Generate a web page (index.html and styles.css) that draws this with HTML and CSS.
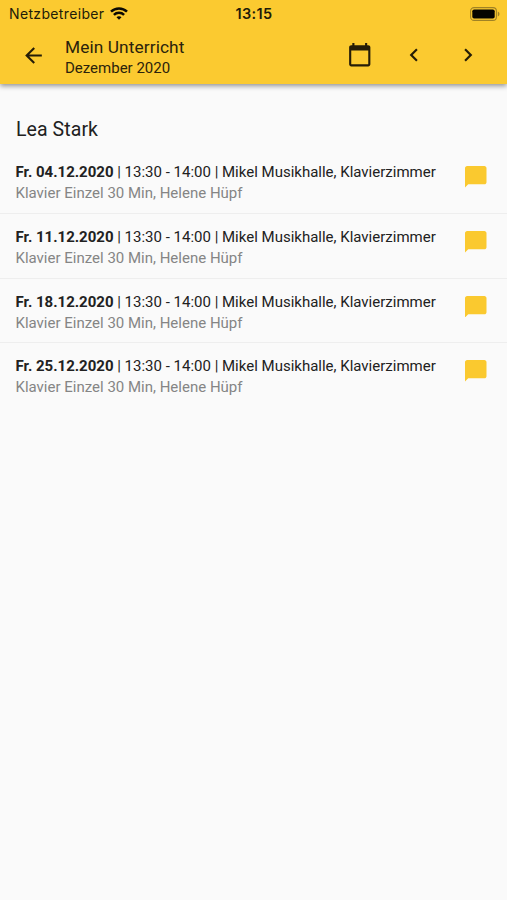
FILE: index.html
```html
<!DOCTYPE html>
<html lang="de">
<head>
<meta charset="utf-8">
<title>Mein Unterricht</title>
<link rel="stylesheet" href="styles.css">
</head>
<body>
<header class="top">
  <div class="status">
    <div class="carrier"><span>Netzbetreiber</span>
      <svg class="wifi" viewBox="0 0 18 13"><path d="M9 9.2a3.6 3.6 0 0 1 2.5 1L9 12.8l-2.500-2.600A3.600 3.600 0 0 1 9 9.200z"/><path class="arc" d="M1 4.700a11.500 11.500 0 0 1 16 0M3.900 7.800a7.300 7.300 0 0 1 10.200 0"/></svg>
    </div>
    <time class="clock">13:15</time>
    <svg class="battery" viewBox="0 0 30 14"><rect class="shell" x=".6" y=".6" width="25.800" height="12.800" rx="3.500"/><rect x="2.300" y="2.400" width="22.400" height="9.200" rx="1.800"/><path class="tip" d="M27.800 4.500c2.200.8 2.200 4.200 0 5z"/></svg>
  </div>
  <nav class="bar">
    <svg class="icon back" viewBox="0 0 24 24"><path d="M20 11H7.830l5.590-5.590L12 4l-8 8 8 8 1.410-1.410L7.830 13H20v-2z"/></svg>
    <div class="titles"><h1>Mein Unterricht</h1><p>Dezember 2020</p></div>
    <svg class="icon calendar" viewBox="0 0 24 24"><path d="M20 3h-1V1h-2v2H7V1H5v2H4c-1.100 0-2 .9-2 2v16c0 1.100.9 2 2 2h16c1.100 0 2-.9 2-2V5c0-1.100-.9-2-2-2zm0 18H4V8h16v13z"/></svg>
    <svg class="icon prev" viewBox="0 0 24 24"><path d="M15.410 7.410 14 6l-6 6 6 6 1.410-1.410L10.830 12z"/></svg>
    <svg class="icon next" viewBox="0 0 24 24"><path d="M10 6 8.590 7.410 13.170 12l-4.580 4.590L10 18l6-6z"/></svg>
  </nav>
</header>
<main>
  <h2>Lea Stark</h2>
  <ul class="lessons">
    <li><div class="text"><p class="when"><b>Fr. 04.12.2020</b><span> | 13:30 - 14:00 | Mikel Musikhalle, Klavierzimmer</span></p><p class="what">Klavier Einzel 30 Min, Helene Hüpf</p></div><svg class="chat" viewBox="2 2 20 20"><path d="M20 2H4c-1.100 0-2 .9-2 2v18l3-3h15c1.100 0 2-.9 2-2V4c0-1.100-.9-2-2-2z"/></svg></li>
    <li><div class="text"><p class="when"><b>Fr. 11.12.2020</b><span> | 13:30 - 14:00 | Mikel Musikhalle, Klavierzimmer</span></p><p class="what">Klavier Einzel 30 Min, Helene Hüpf</p></div><svg class="chat" viewBox="2 2 20 20"><path d="M20 2H4c-1.100 0-2 .9-2 2v18l3-3h15c1.100 0 2-.9 2-2V4c0-1.100-.9-2-2-2z"/></svg></li>
    <li><div class="text"><p class="when"><b>Fr. 18.12.2020</b><span> | 13:30 - 14:00 | Mikel Musikhalle, Klavierzimmer</span></p><p class="what">Klavier Einzel 30 Min, Helene Hüpf</p></div><svg class="chat" viewBox="2 2 20 20"><path d="M20 2H4c-1.100 0-2 .9-2 2v18l3-3h15c1.100 0 2-.9 2-2V4c0-1.100-.9-2-2-2z"/></svg></li>
    <li><div class="text"><p class="when"><b>Fr. 25.12.2020</b><span> | 13:30 - 14:00 | Mikel Musikhalle, Klavierzimmer</span></p><p class="what">Klavier Einzel 30 Min, Helene Hüpf</p></div><svg class="chat" viewBox="2 2 20 20"><path d="M20 2H4c-1.100 0-2 .9-2 2v18l3-3h15c1.100 0 2-.9 2-2V4c0-1.100-.9-2-2-2z"/></svg></li>
  </ul>
</main>
</body>
</html>
```
FILE: styles.css
```css
* { box-sizing: border-box; margin: 0; padding: 0; }
body { background: #fafafa; color: #212121; font-family: Roboto, sans-serif; min-height: 900px; }
svg { display: block; flex: none; }
.top { height: 84px; background: #fbca30; box-shadow: 0 2px 5px rgba(0,0,0,.42); color: #2b230c; }
.status { height: 27px; display: grid; grid-template-columns: 1fr auto 1fr; align-items: center; padding: 0 7px 0 9px; font-family: Inter, sans-serif; font-size: 14px; color: #211b08; }
.carrier { display: flex; align-items: center; gap: 6px; letter-spacing: .35px; }
.wifi { width: 18px; height: 13px; fill: #0c0a03; }
.arc { fill: none; stroke: #0c0a03; stroke-width: 2.500; }
.clock { font-weight: 600; font-size: 14.500px; letter-spacing: .35px; margin-right: 1px; }
.battery { width: 30px; height: 14px; justify-self: end; fill: #050400; }
.shell { fill: none; stroke: #a08225; stroke-width: 1.100; }
.battery .tip { fill: #a08225; }
.bar { height: 56px; display: flex; align-items: center; padding: 0 26px 0 20px; }
.icon { width: 26px; height: 26px; fill: #251d07; }
.icon.back { width: 25px; height: 25px; margin-left: 1px; }
.titles { margin-left: 19px; flex: 1; padding-top: 5px; }
h1 { font-size: 17.300px; line-height: 21px; font-weight: 400; letter-spacing: .1px; }
.titles p { font-size: 15px; line-height: 20px; letter-spacing: 0; }
.prev { margin-left: 29px; }
.next { margin-left: 28px; }
h2 { padding: 33px 16px 0; height: 77px; font-size: 19.500px; line-height: 26px; font-weight: 400; letter-spacing: .08px; }
.lessons { list-style: none; }
.lessons li { height: 64.700px; display: flex; justify-content: space-between; align-items: flex-start; padding: 0 20.500px 0 15.500px; }
.lessons li + li { box-shadow: inset 0 1px #eee; }
.lessons li:first-child { height: 52px; }
.text { padding-top: 14px; white-space: nowrap; }
.lessons li:first-child .text { padding-top: 1px; }
.when { font-size: 15px; line-height: 21px; }
.when b { font-weight: 700; }
.what { font-size: 15px; line-height: 20px; color: #858585; }
.chat { width: 21.500px; height: 21.500px; margin-top: 18px; fill: #fac92f; }
.lessons li:first-child .chat { margin-top: 5px; }
.calendar { width: 25.500px; height: 25.500px; }
```
